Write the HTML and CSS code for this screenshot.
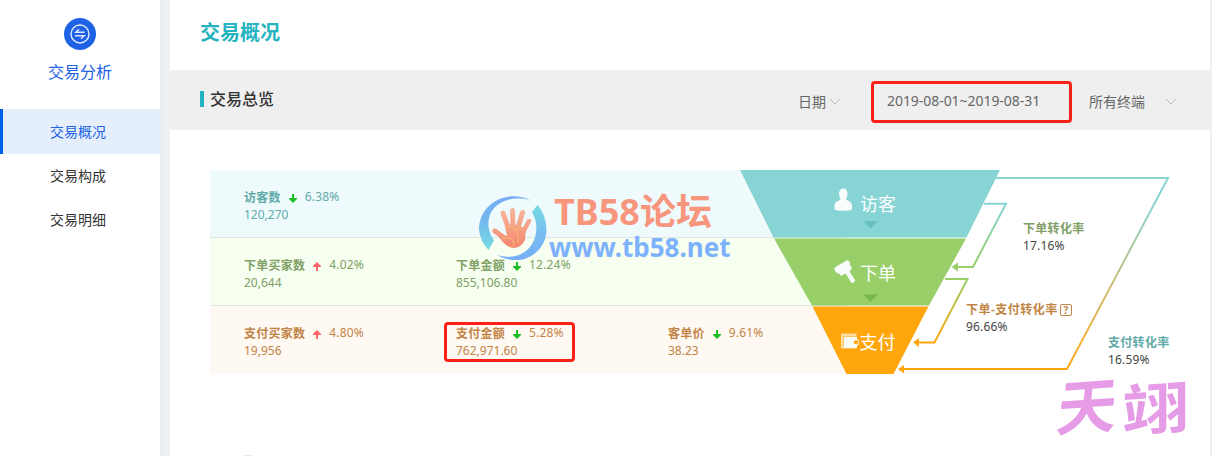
FILE: index.html
```html
<!DOCTYPE html>
<html lang="zh-CN">
<head>
<meta charset="utf-8">
<title>交易概况</title>
<link rel="stylesheet" href="styles.css">
</head>
<body>
<div class="app">
  <nav class="sidebar">
    <svg class="side-icon" viewBox="0 0 32 32"><circle cx="16" cy="16" r="16" fill="#2062e6"/><g fill="none" stroke="#dce8ff" stroke-width="1.400"><circle cx="16" cy="16" r="9"/><path d="M20.500 14.300H11.800L15 11.300M11 17.700H20.200L17 20.700"/></g></svg>
    <div class="side-title">交易分析</div>
    <a class="item active">交易概况</a>
    <a class="item">交易构成</a>
    <a class="item">交易明细</a>
  </nav>
  <main class="main">
    <h1 class="title">交易概况</h1>
    <header class="bar">
      <h2 class="section">交易总览</h2>
      <div class="filter date-type">日期<svg class="chev" viewBox="0 0 12 7"><path d="M1 1L6 6L11 1"/></svg></div>
      <div class="range">2019-08-01~2019-08-31</div>
      <div class="filter terminal">所有终端<svg class="chev" viewBox="0 0 12 7"><path d="M1 1L6 6L11 1"/></svg></div>
    </header>
    <section class="chart">
      <div class="rows">
        <div class="row visit">
          <div class="cell"><div class="head"><b>访客数</b><svg class="arrow down" viewBox="0 0 8 9"><path d="M3 0H5V4H8V5L4 9L0 5V4H3Z"/></svg><span>6.38%</span></div><div>120,270</div></div>
        </div>
        <div class="row order">
          <div class="cell"><div class="head"><b>下单买家数</b><svg class="arrow up" viewBox="0 0 8 9"><path d="M3 9H5V5H8V4L4 0L0 4V5H3Z"/></svg><span>4.02%</span></div><div>20,644</div></div>
          <div class="cell"><div class="head"><b>下单金额</b><svg class="arrow down" viewBox="0 0 8 9"><path d="M3 0H5V4H8V5L4 9L0 5V4H3Z"/></svg><span>12.24%</span></div><div>855,106.80</div></div>
        </div>
        <div class="row pay">
          <div class="cell"><div class="head"><b>支付买家数</b><svg class="arrow up" viewBox="0 0 8 9"><path d="M3 9H5V5H8V4L4 0L0 4V5H3Z"/></svg><span>4.80%</span></div><div>19,956</div></div>
          <div class="cell marked"><div class="head"><b>支付金额</b><svg class="arrow down" viewBox="0 0 8 9"><path d="M3 0H5V4H8V5L4 9L0 5V4H3Z"/></svg><span>5.28%</span></div><div>762,971.60</div></div>
          <div class="cell"><div class="head"><b>客单价</b><svg class="arrow down" viewBox="0 0 8 9"><path d="M3 0H5V4H8V5L4 9L0 5V4H3Z"/></svg><span>9.61%</span></div><div>38.23</div></div>
        </div>
      </div>
      <svg class="funnel" viewBox="730 170 450 204">
        <defs>
          <linearGradient id="g1" gradientUnits="userSpaceOnUse" x1="0" y1="204" x2="0" y2="267"><stop stop-color="#87d4d4"/><stop offset="1" stop-color="#97cf68"/></linearGradient>
          <linearGradient id="g2" gradientUnits="userSpaceOnUse" x1="0" y1="279" x2="0" y2="342"><stop stop-color="#97cf68"/><stop offset="1" stop-color="#ffa60d"/></linearGradient>
          <linearGradient id="g3" gradientUnits="userSpaceOnUse" x1="0" y1="179" x2="0" y2="369"><stop stop-color="#87d4d4"/><stop offset=".12" stop-color="#87d4d4"/><stop offset=".85" stop-color="#f5b13b"/><stop offset="1" stop-color="#ffa60d"/></linearGradient>
        </defs>
        <path fill="#87d4d4" d="M740 170H1000L966.500 237.500H773.500Z"/>
        <path fill="#98cf68" d="M774 238.500H966L929 305.500H812Z"/>
        <path fill="#ffa60d" d="M812.500 306.500H928.500L893.500 374H846.500Z"/>
        <path fill="#67bfbf" d="M863.500 221H878L870.500 228.500Z"/>
        <path fill="#78b94b" d="M863.500 294.500H878L870.500 302Z"/>
        <g fill="none" stroke-width="2">
          <path stroke="url(#g3)" d="M996 178H1168L1067 369H904"/>
          <path stroke="url(#g1)" d="M984 203.700H1006L973 267H958"/>
          <path stroke="url(#g2)" d="M945 279H967.500L934.500 342.500H919"/>
        </g>
        <path fill="#97cf68" d="M951.500 267L958 262.500V271.500Z"/>
        <path fill="#ffa60d" d="M913 342.500L919 338V347ZM898 369.300L904 365V373.500Z"/>
        <g fill="#f8fcfa">
          <path d="M843.300 188.500C846.300 188.500 847.600 191 847.500 194C847.400 196.500 846.400 198.500 845.800 200C849.500 200.500 852 202.500 852 206V209Q852 210.800 843.300 210.800Q834.500 210.800 834.500 209V206C834.500 202.500 837 200.500 840.800 200C840.100 198.500 839.200 196.500 839.100 194C839 191 840.300 188.500 843.300 188.500Z"/>
          <path d="M834 268.500L837 266L847.500 260L850 262.500L849.500 264L852 268L849.500 271.500L855.300 280.500Q854 283.300 851.500 282.800L845.500 273.500L841 276L839.500 274L836 272.500Z"/>
          <path fill="#ffdda0" d="M841 333.500H856.500V339.500H859V345.500H856.500V348.500H841Z"/>
          <path d="M843.500 337H857V340A3 3 0 0 0 857 345V348H843.500Z"/>
        </g>
        <circle cx="855.800" cy="342.300" r="2" fill="#ffa60d"/><path fill="none" stroke="#ffc45c" d="M843.500 347V336.500H856"/>
        <g class="stage"><text x="860" y="211">访客</text><text x="860" y="280">下单</text><text x="859.500" y="348.500">支付</text></g>
      </svg>
      <div class="rate r1"><b>下单转化率</b><span>17.16%</span></div>
      <div class="rate r2"><b>下单-支付转化率<i class="help">?</i></b><span>96.66%</span></div>
      <div class="rate r3"><b>支付转化率</b><span>16.59%</span></div>
      <div class="forum">
        <svg class="hand" viewBox="478 193 70 68">
          <defs><linearGradient id="ringL" x1="0" y1="0" x2="0" y2="1"><stop stop-color="#78adf6"/><stop offset=".4" stop-color="#72b5ed"/><stop offset="1" stop-color="#76dce3"/></linearGradient><linearGradient id="ringR" x1="0" y1="0" x2="0" y2="1"><stop stop-color="#76dce3"/><stop offset=".5" stop-color="#78bdf0"/><stop offset="1" stop-color="#78aef8"/></linearGradient><linearGradient id="palm" gradientUnits="userSpaceOnUse" x1="0" y1="208" x2="0" y2="248"><stop stop-color="#f8b79d"/><stop offset="1" stop-color="#f58670"/></linearGradient></defs>
          <path fill="url(#ringL)" d="M530 200C506 189 479 204 479 230Q480 241 488.500 250L494 240.500C479 219 495 192 530 200Z"/>
          <path fill="url(#ringR)" d="M537.500 205L532 212C544 231 531 265 497 255C523 269 546 252 546.500 230Q546 214 537.500 205Z"/>
          <g fill="none" stroke="url(#palm)" stroke-linecap="round">
            <path stroke-width="5" d="M503 213L509 230M512.500 210.500L513 230M522.500 212.500L517 231"/>
            <path stroke-width="4.500" d="M529 221L521 236"/>
            <path stroke-width="5" d="M495 231L507 240"/>
          </g>
          <path fill="url(#palm)" d="M505 226Q514 222 526 229L525 240Q521 248 513 248Q504 247 496 232L507 236Z"/>
          <path fill="none" stroke="#f7bb6b" d="M505 229Q512 224 516 229Q521 228 522 230M515 229Q519 234 518 243M502 238Q513 237 514 243Q514 248 510 247"/>
        </svg>
        <div class="forum-name">TB58论坛</div>
        <div class="forum-url">www.tb58.net</div>
      </div>
    </section>
    <svg class="brand" viewBox="0 0 140 70"><g><text transform="translate(3 59) rotate(-4) skewX(-10)">天</text><text transform="translate(70 60) rotate(-4) skewX(-4) scale(1.120 .940)">翊</text></g></svg>
    <div class="next-card"></div>
  </main>
</div>
</body>
</html>
```
FILE: styles.css
```css
*, *::before, *::after { box-sizing: border-box; }
body { margin: 0; overflow: hidden; background: #edf1f6; font: 12px/18px "Noto Sans", "Noto Sans CJK SC", sans-serif; color: #333; }
h1, h2 { margin: 0; }
.app { display: flex; width: 1212px; height: 456px; gap: 10px; background: linear-gradient(90deg, #e6eaef 160px, #edf1f6 165px); }
.sidebar { width: 160px; background: #fff; display: flex; flex-direction: column; align-items: center; padding-top: 18px; }
.side-icon { width: 32px; height: 32px; }
.side-title { height: 59px; padding-top: 10px; font-size: 16px; line-height: 24px; color: #2062e6; }
.item { width: 160px; height: 44px; padding-left: 50px; font-size: 14px; line-height: 44px; }
.item.active { height: 45px; color: #2062e6; background: #e5effb; border-left: 3px solid #0060ee; padding-left: 47px; line-height: 46px; }
.main { position: relative; width: 1040px; height: 456px; background: #fff; overflow: hidden; }
.title { height: 70px; padding: 18px 0 0 30px; font-size: 20px; line-height: 30px; color: #24b3bf; }
.bar { display: flex; height: 60px; padding-left: 30px; background: #efefef; color: #666; font-size: 14px; }
.section { display: flex; align-items: center; width: 598px; height: 58px; color: #333; font-size: 16px; font-weight: 500; }
.section::before { content: ""; width: 4px; height: 16px; margin-right: 6px; background: #24b3bf; }
.filter { display: flex; align-items: center; height: 63px; }
.date-type { width: 73px; gap: 3px; }
.chev { width: 12px; height: 7px; fill: none; stroke: #bbb; }
.range { width: 201px; height: 42px; margin-top: 11px; padding-left: 13px; border: 3px solid #fc2117; border-radius: 4px; line-height: 34px; letter-spacing: -.05px; }
.terminal { padding-left: 17px; gap: 20px; }
.chart { position: relative; margin: 40px 0 0 40px; width: 970px; height: 204px; }
.rows { width: 636px; }
.row { display: flex; height: 68px; padding: 18px 0 0 34px; border-bottom: 1px solid #e0e5e3; }
.cell { position: relative; flex: none; width: 212px; }
.head { display: flex; align-items: center; gap: 8px; }
.head b { letter-spacing: .25px; position: relative; top: 1px; }
.head span { letter-spacing: .2px; }
.arrow { width: 8px; height: 9px; margin-top: 2px; }
.down { fill: #1fbe27; }
.up { fill: #ff6665; }
.visit { background: #eefafb; color: #62aaaa; }
.order { background: #f6fff0; color: #80a065; }
.pay { background: #fff9f4; color: #c28444; border: 0; }
.marked::after { content: ""; position: absolute; left: -12px; top: -2px; width: 131px; height: 40px; border: 3px solid #fc2117; border-radius: 4px; }
.funnel { position: absolute; left: 520px; top: 0; width: 450px; height: 204px; }
.stage { font-size: 18px; fill: #fff; }
.rate { position: absolute; display: flex; flex-direction: column; color: #444; white-space: nowrap; }
.rate b { display: flex; align-items: center; font-weight: 600; letter-spacing: .3px; position: relative; top: 1px; }
.rate span { letter-spacing: .15px; }
.r1 { left: 813px; top: 49px; }
.r1 b { color: #80a065; }
.r2 { left: 756px; top: 130px; }
.r2 b { color: #c28444; letter-spacing: .5px; }
.r3 { left: 898px; top: 163px; }
.r3 b { color: #62aaaa; }
.help { width: 12px; height: 12px; margin-left: 2px; border: 1px solid #c28444; border-radius: 2px; font: bold 10px/10px "Noto Sans", sans-serif; letter-spacing: 0; text-align: center; }
.forum { position: absolute; left: 268px; top: 23px; display: grid; grid-template-columns: 70px 190px; grid-template-rows: 38px 30px; column-gap: 6px; font-weight: 700; white-space: nowrap; }
.hand { grid-row: 1 / 3; width: 70px; height: 68px; }
.forum-name { font-size: 36px; line-height: 38px; color: #f8957d; }
.forum-url { margin-left: -5px; font-size: 26px; line-height: 32px; color: #7db1fc; }
.brand { position: absolute; left: 882px; top: 372px; width: 140px; height: 70px; overflow: visible; fill: #e59be5; font: 700 60px "Noto Sans CJK SC", sans-serif; }
.next-card { position: absolute; left: 68px; top: 455px; width: 20px; height: 12px; border-radius: 50%; background: #dcebdc; }
```
